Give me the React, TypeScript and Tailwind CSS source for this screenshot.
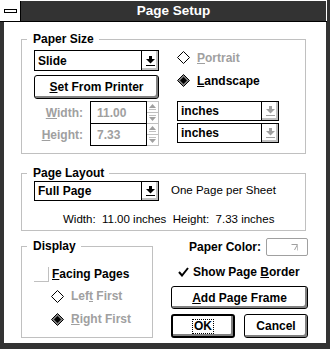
import React from "react";

function DownArrow({ color = "#000" }: { color?: string }) {
  return (
    <svg width="9" height="10" viewBox="0 0 9 10">
      <rect x="3" y="0" width="3" height="3" fill={color} />
      <polygon points="0,3 9,3 4.5,7.5" fill={color} />
      <rect x="0" y="9" width="9" height="1" fill={color} />
    </svg>
  );
}

function Dropdown({ text, disabled = false, w, h = 21 }: { text: string; disabled?: boolean; w: string; h?: number }) {
  return (
    <div className={`flex border border-black bg-white ${w}`} style={{ height: h }}>
      <div className="flex-1 pl-[3px] flex items-center text-[12px] font-bold text-black leading-none">{text}</div>
      <div className="w-[17px] border-l border-black flex items-center justify-center shadow-[inset_-2px_-2px_0_#c0c0c0]">
        <DownArrow color={disabled ? "#a0a0a0" : "#000"} />
      </div>
    </div>
  );
}

function Diamond({ checked = false }: { checked?: boolean }) {
  return (
    <svg width="13" height="13" viewBox="0 0 13 13">
      <polygon points="6.5,0.5 12.5,6.5 6.5,12.5 0.5,6.5" fill={checked ? "#808080" : "#fff"} stroke="#000" strokeWidth="1" />
      {checked && <polygon points="6.5,3 10,6.5 6.5,10 3,6.5" fill="#000" />}
    </svg>
  );
}

function Spin() {
  return (
    <div className="w-[12px] h-[23px] flex flex-col border-r border-t border-b border-[#c0c0c0]">
      <div className="h-[11px] flex items-center justify-center border-b border-[#c0c0c0]">
        <svg width="7" height="6" viewBox="0 0 7 6">
          <polygon points="3.5,0 7,4 0,4" fill="#a0a0a0" />
          <rect x="0" y="5" width="7" height="1" fill="#c0c0c0" />
        </svg>
      </div>
      <div className="h-[11px] flex items-center justify-center">
        <svg width="7" height="6" viewBox="0 0 7 6">
          <rect x="0" y="0" width="7" height="1" fill="#c0c0c0" />
          <polygon points="0,2 7,2 3.5,6" fill="#a0a0a0" />
        </svg>
      </div>
    </div>
  );
}

function Button({ children, w, h, def = false }: { children: React.ReactNode; w: string; h: string; def?: boolean }) {
  return (
    <div
      className={`${w} ${h} ${def ? "border-2" : "border"} border-black rounded-[3px] bg-white flex items-center justify-center text-[12px] font-bold text-black shadow-[inset_-2px_-2px_0_#808080]`}
    >
      {children}
    </div>
  );
}

function Group({ label, className, children }: { label: string; className: string; children?: React.ReactNode }) {
  return (
    <div className={`relative border border-[#c0c0c0] ${className}`}>
      <div className="absolute left-[5px] top-[-9px] pl-[6px] pr-[5px] bg-white text-[12px] font-bold text-black leading-[16px]">
        {label}
      </div>
      {children}
    </div>
  );
}

export default function App() {
  const G = "text-[#a0a0a0]";
  return (
    <div className="w-[330px] h-[349px] bg-[#333333] flex flex-col font-['Liberation_Sans',Arial,sans-serif] select-none overflow-hidden">
      {/* title */}
      <div className="h-[1px] w-[327px] bg-white" />
      <div className="flex h-[20px]">
        <div className="w-[21px] bg-white flex items-center justify-center border-r border-black">
          <div className="w-[13px] h-[4px] border border-black bg-white" />
        </div>
        <div className="w-[305px] bg-[#333333] flex items-center justify-center text-white text-[13.5px] font-bold">
          Page Setup
        </div>
        <div className="w-[1px] bg-white" />
      </div>
      <div className="h-[1px] w-[327px] bg-black" />
      {/* body */}
      <div className="flex">
        <div className="w-[4px]" />
        <div className="w-[322px] h-[321px] bg-white flex flex-col">
          {/* Paper size */}
          <Group label="Paper Size" className="ml-[17px] mt-[17px] w-[285px] h-[115px]">
            <div className="flex">
              <div className="ml-[12px] w-[125px] flex flex-col">
                <div className="mt-[10px]">
                  <Dropdown text="Slide" w="w-[125px]" />
                </div>
                <div className="mt-[4px]">
                  <Button w="w-[125px]" h="h-[24px]">
                    <span>
                      <u>S</u>et From Printer
                    </span>
                  </Button>
                </div>
                <div className="mt-[2px] flex">
                  <div className="w-[50px] flex flex-col">
                    <div className={`h-[23px] flex items-center justify-end text-[12px] font-bold ${G}`}>
                      <span>
                        <u>W</u>idth:
                      </span>
                    </div>
                    <div className={`h-[22px] flex items-center justify-end text-[12px] font-bold ${G}`}>
                      <span>
                        <u>H</u>eight:
                      </span>
                    </div>
                  </div>
                  <div className="ml-[7px] flex flex-col">
                    <div className="flex">
                      <div className={`w-[57px] h-[23px] border border-black pl-[6px] flex items-center text-[12px] font-bold ${G}`}>11.00</div>
                      <Spin />
                    </div>
                    <div className="flex mt-[-1px]">
                      <div className={`w-[57px] h-[23px] border border-black pl-[6px] flex items-center text-[12px] font-bold ${G}`}>7.33</div>
                      <Spin />
                    </div>
                  </div>
                </div>
              </div>
              <div className="ml-[18px] flex flex-col">
                <div className="mt-[11px] h-[13px] flex items-center">
                  <Diamond />
                  <span className={`ml-[7px] text-[12px] font-bold ${G}`}>
                    <u>P</u>ortrait
                  </span>
                </div>
                <div className="mt-[10px] h-[13px] flex items-center">
                  <Diamond checked />
                  <span className="ml-[7px] text-[12px] font-bold text-black">
                    <u>L</u>andscape
                  </span>
                </div>
                <div className="mt-[14px]">
                  <Dropdown text="inches" w="w-[102px]" h={20} disabled />
                </div>
                <div className="mt-[2px]">
                  <Dropdown text="inches" w="w-[102px]" h={20} disabled />
                </div>
              </div>
            </div>
          </Group>

          {/* Page layout */}
          <Group label="Page Layout" className="ml-[17px] mt-[19px] w-[285px] h-[58px]">
            <div className="flex items-center mt-[7px]">
              <div className="ml-[12px]">
                <Dropdown text="Full Page" w="w-[125px]" h={20} />
              </div>
              <div className="ml-[12px] text-[11.5px] text-black">One Page per Sheet</div>
            </div>
            <div className="mt-[11px] ml-[41px] text-[11.5px] text-black whitespace-pre leading-[14px]">
              {"Width:  11.00 inches  Height:  7.33 inches"}
            </div>
          </Group>

          {/* bottom */}
          <div className="flex mt-[7px]">
            <Group label="Display" className="ml-[17px] mt-[8px] w-[132px] h-[92px]">
              <div className="flex items-center mt-[18px] ml-[12px]">
                <div className="w-[15px] h-[15px] border-r border-b border-[#c0c0c0]" />
                <span className="ml-[3px] text-[12px] font-bold text-black">
                  <u>F</u>acing Pages
                </span>
              </div>
              <div className="flex items-center mt-[4px] ml-[29px]">
                <Diamond />
                <span className={`ml-[7px] text-[12px] font-bold ${G}`}>
                  Lef<u>t</u> First
                </span>
              </div>
              <div className="flex items-center mt-[5px] ml-[29px]">
                <Diamond checked />
                <span className={`ml-[7px] text-[12px] font-bold ${G}`}>
                  <u>R</u>ight First
                </span>
              </div>
            </Group>
            <div className="ml-[18px] w-[137px] flex flex-col">
              <div className="h-[18px] flex items-center justify-end">
                <span className="text-[12px] font-bold text-black">Paper Color:</span>
                <div className="ml-[5px] w-[42px] h-[18px] border border-[#a0a0a0] rounded-[2px] flex items-center justify-end pr-[9px]">
                  <svg width="7" height="7" viewBox="0 0 7 7">
                    <polyline points="0.5,0.5 6.5,0.5 3.5,6" fill="none" stroke="#a0a0a0" strokeWidth="1" />
                    <line x1="6.5" y1="0.5" x2="6.5" y2="6.5" stroke="#c0c0c0" />
                  </svg>
                </div>
              </div>
              <div className="mt-[9px] h-[14px] flex items-center">
                <svg width="11" height="10" viewBox="0 0 11 10" className="ml-[7px]">
                  <polyline points="1,5 4,8.5 10,1" fill="none" stroke="#000" strokeWidth="2" />
                </svg>
                <span className="ml-[4px] text-[12px] font-bold text-black">
                  Show Page <u>B</u>order
                </span>
              </div>
              <div className="mt-[7px]">
                <Button w="w-[137px]" h="h-[23px]">
                  <span>
                    <u>A</u>dd Page Frame
                  </span>
                </Button>
              </div>
              <div className="mt-[5px] flex justify-between">
                <Button w="w-[64px]" h="h-[24px]" def>
                  <span className="border border-dotted border-black px-[1px] leading-[13px]">OK</span>
                </Button>
                <Button w="w-[64px]" h="h-[24px]">
                  Cancel
                </Button>
              </div>
            </div>
          </div>
        </div>
        <div className="w-[4px]" />
      </div>
    </div>
  );
}
